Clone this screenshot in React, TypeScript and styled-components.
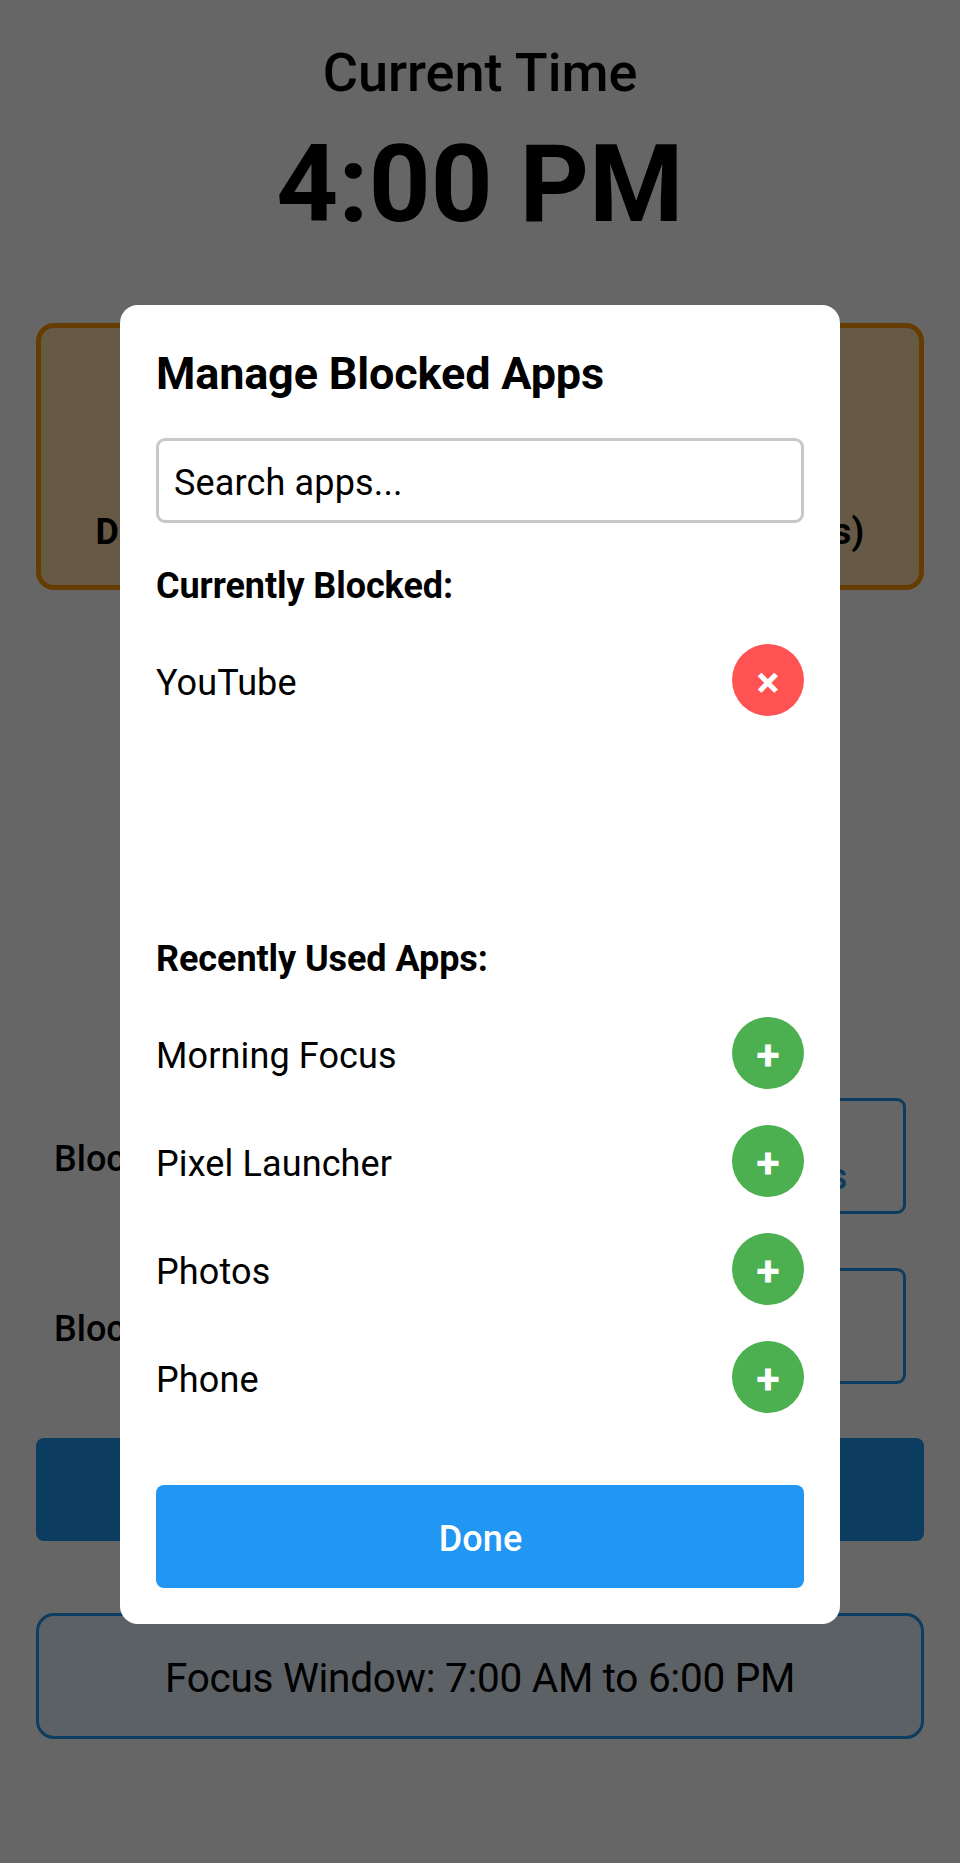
import React from "react";
import styled, { createGlobalStyle } from "styled-components";

const GlobalStyle = createGlobalStyle`
  * { box-sizing: border-box; }
  body { margin: 0; background: #fff; color: #000; font-family: Roboto, sans-serif; }
  button { font-family: inherit; }
`;

const Screen = styled.main`
  display: flex;
  flex-direction: column;
  height: 1863px;
  padding: 36px 36px 0;
  overflow: hidden;
`;

const ClockLabel = styled.div`
  font-size: 54px;
  font-weight: 500;
  line-height: 73px;
  text-align: center;
`;

const ClockTime = styled.div`
  font-size: 108px;
  font-weight: 700;
  line-height: 150px;
  margin-bottom: 64px;
  text-align: center;
`;

const Banner = styled.section`
  display: flex;
  flex-direction: column;
  justify-content: flex-end;
  align-items: center;
  height: 267px;
  padding-bottom: 26px;
  border: 5px solid #ff9800;
  border-radius: 18px;
  background: #ffe0b2;
  font-size: 36px;
  font-weight: 700;
  line-height: 54px;
  letter-spacing: 0.27px;
  white-space: nowrap;
`;

const Settings = styled.section`
  display: flex;
  flex-direction: column;
  gap: 54px;
  margin-top: 508px;
  padding: 0 18px;
`;

const SettingRow = styled.div`
  display: flex;
  align-items: center;
  justify-content: space-between;
  height: 116px;
`;

const SettingLabel = styled.span`
  padding-top: 5px;
  font-size: 36px;
  font-weight: 500;
  line-height: 44px;
`;

const OutlineButton = styled.button`
  width: 200px;
  height: 116px;
  padding: 13px 36px;
  border: 3px solid #2196f3;
  border-radius: 9px;
  background: transparent;
  color: #2196f3;
  font-size: 36px;
  font-weight: 500;
  line-height: 42px;
`;

const PrimaryButton = styled.button`
  display: flex;
  align-items: center;
  justify-content: center;
  width: 100%;
  height: 103px;
  flex-shrink: 0;
  padding: 4px 0 0 1px;
  border: 0;
  border-radius: 8px;
  background: #2196f3;
  color: #fff;
  font-size: 36px;
  font-weight: 500;
  letter-spacing: 0.1px;
`;

const SettingsAction = styled.div`
  margin: 54px 0 72px;
`;

const FocusWindow = styled.section`
  display: flex;
  align-items: center;
  justify-content: center;
  height: 126px;
  padding-top: 4px;
  border: 3px solid #2196f3;
  border-radius: 18px;
  background: #e3f2fd;
  font-size: 40.5px;
  letter-spacing: -0.28px;
`;

const Overlay = styled.div`
  position: fixed;
  inset: 0;
  display: flex;
  justify-content: center;
  align-items: flex-start;
  padding-top: 305px;
  background: rgba(0, 0, 0, 0.6);
`;

const Dialog = styled.div`
  width: 720px;
  height: 1319px;
  padding: 36px;
  border-radius: 18px;
  background: #fff;
`;

const DialogTitle = styled.h1`
  margin: 0 0 32px;
  font-size: 45px;
  font-weight: 700;
  line-height: 65px;
  letter-spacing: -0.17px;
`;

const SearchInput = styled.input`
  display: block;
  width: 100%;
  height: 85px;
  padding: 4px 15px 0;
  border: 3px solid #c8c8c8;
  border-radius: 9px;
  background: #fff;
  font: 400 36px Roboto, sans-serif;
  letter-spacing: 0.15px;
  &::placeholder { color: #000; opacity: 1; }
`;

const SectionTitle = styled.h2`
  margin: 41px 0 18px;
  font-size: 36px;
  font-weight: 700;
  line-height: 44px;
  letter-spacing: -0.08px;
`;

const AppList = styled.ul<{ $height?: number }>`
  margin: 0;
  padding: 0;
  list-style: none;
  height: ${({ $height }) => ($height ? `${$height}px` : "auto")};
`;

const AppRow = styled.li`
  display: flex;
  align-items: center;
  justify-content: space-between;
  height: 108px;
`;

const AppName = styled.span`
  padding-top: 6px;
  font-size: 36px;
  line-height: 44px;
  letter-spacing: 0.12px;
`;

const RoundButton = styled.button<{ $tone: "add" | "remove" }>`
  display: flex;
  align-items: center;
  justify-content: center;
  width: 72px;
  height: 72px;
  padding: 6px 0 0;
  border: 0;
  border-radius: 50%;
  background: ${({ $tone }) => ($tone === "add" ? "#4caf50" : "#ff5252")};
  color: #fff;
  font-size: 43.2px;
  font-weight: 700;
  line-height: 50px;
`;

const DialogAction = styled.div`
  margin-top: 54px;
`;

const blockedApps = ["YouTube"];
const recentApps = ["Morning Focus", "Pixel Launcher", "Photos", "Phone"];

export default function App() {
  return (
    <>
      <GlobalStyle />
      <Screen>
        <ClockLabel>Current Time</ClockLabel>
        <ClockTime>4:00 PM</ClockTime>
        <Banner>Distracting apps are currently blocked (1 apps)</Banner>
        <Settings>
          <SettingRow>
            <SettingLabel>Block</SettingLabel>
            <OutlineButton>Edit<br />Apps</OutlineButton>
          </SettingRow>
          <SettingRow>
            <SettingLabel>Block</SettingLabel>
            <OutlineButton>Edit</OutlineButton>
          </SettingRow>
        </Settings>
        <SettingsAction>
          <PrimaryButton>Save</PrimaryButton>
        </SettingsAction>
        <FocusWindow>Focus Window: 7:00 AM to 6:00 PM</FocusWindow>
      </Screen>
      <Overlay>
        <Dialog role="dialog" aria-label="Manage Blocked Apps">
          <DialogTitle>Manage Blocked Apps</DialogTitle>
          <SearchInput placeholder="Search apps..." />
          <SectionTitle>Currently Blocked:</SectionTitle>
          <AppList $height={270}>
            {blockedApps.map((name) => (
              <AppRow key={name}>
                <AppName>{name}</AppName>
                <RoundButton $tone="remove">×</RoundButton>
              </AppRow>
            ))}
          </AppList>
          <SectionTitle>Recently Used Apps:</SectionTitle>
          <AppList>
            {recentApps.map((name) => (
              <AppRow key={name}>
                <AppName>{name}</AppName>
                <RoundButton $tone="add">+</RoundButton>
              </AppRow>
            ))}
          </AppList>
          <DialogAction>
            <PrimaryButton>Done</PrimaryButton>
          </DialogAction>
        </Dialog>
      </Overlay>
    </>
  );
}
